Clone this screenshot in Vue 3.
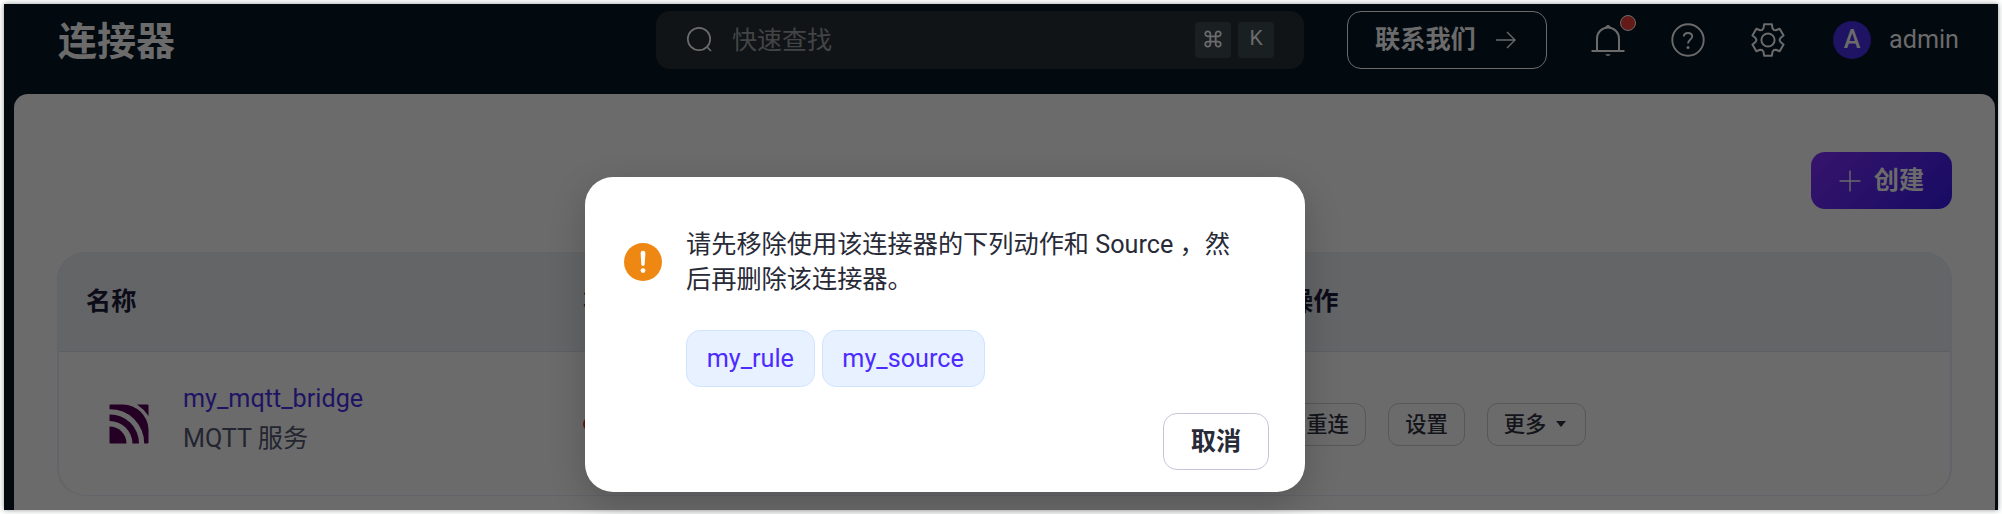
<script setup>
const keys = ['⌘', 'K']
const rules = ['my_rule', 'my_source']
const gear = (() => {
  const pts = []
  const r = (rad, deg) => {
    const a = (deg * Math.PI) / 180
    pts.push(`${(17 + rad * Math.sin(a)).toFixed(2)} ${(17 - rad * Math.cos(a)).toFixed(2)}`)
  }
  for (let i = 0; i < 6; i++) {
    r(16.2, i * 60 - 14)
    r(16.2, i * 60 + 14)
    r(12.6, i * 60 + 21)
    r(11.6, i * 60 + 30)
    r(12.6, i * 60 + 39)
  }
  return `M${pts.join('L')}Z`
})()
</script>

<template>
  <div class="page">
    <div class="screen">
      <header class="bar">
        <h1>连接器</h1>
        <div class="search">
          <svg class="glass" width="28" height="28" viewBox="0 0 28 28"><circle cx="13" cy="13" r="11.2" /><path d="M20.5 20.5L25 25" /></svg>
          <span class="placeholder">快速查找</span>
          <kbd v-for="k in keys" :key="k">
            <svg v-if="k === '⌘'" width="18" height="18" viewBox="0 0 20 20"><path d="M7 7H4.6A2.8 2.8 0 1 1 7 4.4V15.6A2.8 2.8 0 1 1 4.6 13H15.4A2.8 2.8 0 1 1 13 15.6V4.4A2.8 2.8 0 1 1 15.4 7Z" /></svg>
            <span v-else>{{ k }}</span>
          </kbd>
        </div>
        <div class="contact">
          <span>联系我们</span>
          <svg width="22" height="20" viewBox="0 0 22 20"><path d="M1 10H20M12 2L20 10L12 18" /></svg>
        </div>
        <div class="bell">
          <svg width="36" height="36" viewBox="0 0 36 36">
            <path d="M7 29V16.5A11 11 0 0 1 29 16.5V29M1.5 29H34.5" />
            <path class="solid" d="M15.5 5A2.6 2.6 0 0 1 20.5 5ZM15.3 32.2H20.7A2.8 2.4 0 0 1 15.3 32.2Z" />
          </svg>
          <i class="badge"></i>
        </div>
        <svg class="help" width="34" height="34" viewBox="0 0 34 34">
          <circle cx="17" cy="17" r="15.7" />
          <path d="M12.8 13.6C12.8 8.8 21.2 8.8 21.2 13.6C21.2 16.6 17 16.6 17 20.6" /><circle class="solid" cx="17" cy="24.4" r="1.5" />
        </svg>
        <svg class="gear" width="34" height="34" viewBox="0 0 34 34"><path :d="gear" /><circle cx="17" cy="17" r="6.6" /></svg>
        <span class="avatar">A</span>
        <span class="user">admin</span>
      </header>

      <main class="panel">
        <div class="toolbar">
          <button class="create">
            <svg width="22" height="22" viewBox="0 0 22 22"><path d="M11 .5V21.5M.5 11H21.5" /></svg>
            <span>创建</span>
          </button>
        </div>
        <section class="table">
          <div class="row head"><span>名称</span><span class="status">状态</span><span>操作</span></div>
          <div class="row body">
            <div class="name">
              <svg width="40" height="40" viewBox="0 0 40 40">
                <path d="M1.5 .5H14A26 26 0 0 1 39.5 25V38.5Q39.5 39.5 38.5 39.5H35.2A34 34 0 0 0 .5 5.2V1.5Q.5 .5 1.5 .5Z" />
                <path d="M28 .5H38.5Q39.5 .5 39.5 1.5V12A40 40 0 0 0 28 .5Z" />
                <path d="M.5 10.5A29 29 0 0 1 30 39.5H23.5A23 23 0 0 0 .5 17Z" />
                <path d="M.5 22.5A17 17 0 0 1 17.5 39.5H1.5Q.5 39.5 .5 38.5Z" />
              </svg>
              <div class="labels"><a>my_mqtt_bridge</a><span>MQTT 服务</span></div>
            </div>
            <div><i class="dot"></i></div>
            <div class="actions">
              <button>重连</button><button>设置</button>
              <button class="more">更多<svg width="10" height="6" viewBox="0 0 10 6"><path d="M0 0H10L5 6Z" /></svg></button>
            </div>
          </div>
        </section>
      </main>

      <div class="dialog">
        <svg class="warn" width="38" height="38" viewBox="0 0 38 38">
          <circle cx="19" cy="19" r="19" fill="#ef8813" />
          <path d="M16.6 10.2A2.4 2.4 0 0 1 21.4 10.2L20.7 21.3A1.7 1.7 0 0 1 17.3 21.3Z" fill="#fff" /><circle cx="19" cy="27.6" r="2.4" fill="#fff" />
        </svg>
        <div class="content">
          <p>请先移除使用该连接器的下列动作和 Source ，然后再删除该连接器。</p>
          <div class="tags"><a v-for="r in rules" :key="r">{{ r }}</a></div>
        </div>
        <button class="cancel">取消</button>
      </div>
    </div>
  </div>
</template>

<style>
body { margin: 0; overflow: hidden; }
</style>

<style scoped>
* { box-sizing: border-box; }
.page {
  height: 514px;
  padding: 4px;
  background: #fcfefd;
  font: 400 25.2px/35px Roboto, "Noto Sans CJK SC", sans-serif;
}
.screen {
  position: relative;
  height: 506px;
  background: #02090f;
  box-shadow: 0 0 5px rgba(0, 0, 0, .4);
  color: #6b6b6b;
}
svg { display: block; flex: none; fill: none; }
button { font: inherit; margin: 0; padding: 0; background: none; color: inherit; }
.bar { display: flex; align-items: center; height: 90px; padding: 0 38px 18px 54px; }
h1 { width: 598px; margin: 3px 0 0; font-size: 39px; line-height: 44px; font-weight: 700; }
.search {
  display: flex; align-items: center;
  width: 648px; height: 58px; padding: 0 30px;
  border-radius: 14px; background: #101416;
}
.glass { stroke: #6b6b6b; stroke-width: 1.7; }
.placeholder { flex: 1; margin-left: 18px; color: #424446; font-size: 25px; }
kbd {
  display: flex; align-items: center; justify-content: center;
  width: 36px; height: 36px; margin-left: 7px;
  border-radius: 4px; background: #1a1f22;
  font: 400 21px/32px Roboto, sans-serif;
}
kbd span { margin-top: -5px; }
kbd svg { stroke: #6b6b6b; stroke-width: 2; margin: -2px 1px 0 0; }
.contact {
  display: flex; align-items: center; gap: 19px;
  width: 200px; height: 58px; margin-left: 43px; padding-left: 27px;
  border: 1px solid #6b6b6b; border-radius: 14px; font-weight: 700;
}
.contact span { margin-top: -2px; }
.contact svg { stroke: #6b6b6b; stroke-width: 1.4; }
.bell { position: relative; margin-left: 43px; }
.bell svg { stroke: #6b6b6b; stroke-width: 2; }
.bell .solid, .help .solid { fill: #6b6b6b; stroke: none; }
.badge {
  position: absolute; left: 30px; top: -7px; width: 16px; height: 16px;
  border: 1px solid #6b6b6b; border-radius: 50%; background: #641b17;
}
.help { margin-left: 45px; stroke: #6b6b6b; stroke-width: 1.9; }
.gear { margin-left: 46px; stroke: #6b6b6b; stroke-width: 2; stroke-linejoin: round; }
.avatar {
  width: 38px; height: 38px; margin-left: 48px;
  border-radius: 50%; background: #1f1363;
  line-height: 37px; text-align: center; font-weight: 500;
}
.user { margin: -2px 0 0 18px; }
.panel {
  height: 416px; margin: 0 3px 0 10px; padding: 58px 43px 0;
  border-radius: 14px 14px 0 0; background: #6b6b6b;
}
.toolbar { display: flex; justify-content: flex-end; }
.create {
  display: flex; align-items: center; justify-content: center; gap: 13px;
  width: 141px; height: 57px; border: 0; border-radius: 14px;
  background: linear-gradient(135deg, #37146c, #170b63); font-weight: 700;
}
.create svg { stroke: #6b6b6b; stroke-width: 1.4; }
.table {
  height: 244px; margin-top: 43px; overflow: hidden;
  border: 1px solid #636469; border-width: 1px 2px; border-radius: 28px;
}
.row { display: grid; grid-template-columns: 496px 706px 1fr; align-items: center; }
.row > * { padding-left: 28px; }
.head { height: 99px; padding-bottom: 2px; border-bottom: 1px solid #5e5f65; background: #646567; color: #0c0c18; font-weight: 700; }
.head > * { padding-left: 27px; }
.head .status { padding-left: 28px; }
.body { height: 143px; }
.row .name { display: flex; align-items: center; gap: 34px; padding-left: 50px; }
.name svg { fill: #240024; }
.labels { display: flex; flex-direction: column; gap: 5px; margin-top: -10px; color: #232530; }
.labels a { color: #1f1363; }
.dot { display: block; width: 14px; height: 14px; border-radius: 50%; background: #641317; }
.actions { display: flex; gap: 22px; margin-top: 1px; color: #14151b; font-size: 21.3px; font-weight: 500; }
.actions button { display: flex; align-items: center; justify-content: center; width: 77px; height: 43px; border: 1px solid #56575a; border-radius: 11px; }
.actions .more { width: 99px; gap: 10px; padding-right: 3px; }
.more svg { fill: #14151b; }
.dialog {
  position: absolute; left: 581px; top: 173px;
  display: grid; grid-template-columns: 38px 1fr; column-gap: 25px; align-content: start;
  width: 720px; height: 315px; padding: 50px 36px 22px 38px;
  border-radius: 28px; background: #fff; color: #282a37;
  box-shadow: 0 12px 36px rgba(0, 0, 0, .2);
}
.warn { margin-top: 16px; margin-left: .5px; }
.content { width: 560px; }
p { margin: 0; line-height: 35px; }
.tags { display: flex; gap: 7px; margin-top: 33px; }
.tags a {
  height: 57px; padding: 0 19.7px; border: 1px solid #cfe5ff; border-radius: 14px;
  background: #e7f1ff; color: #4d2bff; line-height: 55px;
}
.cancel {
  grid-column: 2; justify-self: end; width: 106px; height: 57px; margin-top: 26px;
  border: 1px solid #c5c5d9; border-radius: 14px; font-weight: 700;
}
</style>
